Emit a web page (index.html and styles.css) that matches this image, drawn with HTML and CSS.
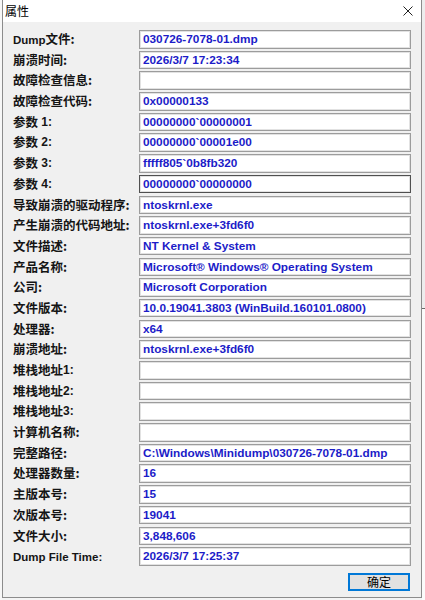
FILE: index.html
```
<!DOCTYPE html>
<html lang="zh-CN">
<head>
    <meta charset="UTF-8">
    <title>属性</title>
    <link rel="stylesheet" href="styles.css">
</head>
<body>
    <div class="desk-left"></div>

    <div class="dialog">
        <div class="titlebar">
            <span class="title">属性</span>
            <svg class="close" width="10" height="10" viewBox="0 0 10 10">
                <path d="M0.5 0.5 L9.5 9.5 M9.5 0.5 L0.5 9.5" stroke="#222" stroke-width="1" fill="none"/>
            </svg>
        </div>

        <div class="props">
            <div class="label"><span class="en">Dump</span>文件:</div><div class="field">030726-7078-01.dmp</div>
            <div class="label">崩溃时间:</div><div class="field">2026/3/7 17:23:34</div>
            <div class="label">故障检查信息:</div><div class="field"></div>
            <div class="label">故障检查代码:</div><div class="field">0x00000133</div>
            <div class="label">参数<span class="en num"> 1:</span></div><div class="field">00000000`00000001</div>
            <div class="label">参数<span class="en num"> 2:</span></div><div class="field">00000000`00001e00</div>
            <div class="label">参数<span class="en num"> 3:</span></div><div class="field">fffff805`0b8fb320</div>
            <div class="label">参数<span class="en num"> 4:</span></div><div class="field focused">00000000`00000000</div>
            <div class="label">导致崩溃的驱动程序:</div><div class="field">ntoskrnl.exe</div>
            <div class="label">产生崩溃的代码地址:</div><div class="field">ntoskrnl.exe+3fd6f0</div>
            <div class="label">文件描述:</div><div class="field">NT Kernel &amp; System</div>
            <div class="label">产品名称:</div><div class="field">Microsoft® Windows® Operating System</div>
            <div class="label">公司:</div><div class="field">Microsoft Corporation</div>
            <div class="label">文件版本:</div><div class="field">10.0.19041.3803 (WinBuild.160101.0800)</div>
            <div class="label">处理器:</div><div class="field">x64</div>
            <div class="label">崩溃地址:</div><div class="field">ntoskrnl.exe+3fd6f0</div>
            <div class="label">堆栈地址<span class="en num">1:</span></div><div class="field"></div>
            <div class="label">堆栈地址<span class="en num">2:</span></div><div class="field"></div>
            <div class="label">堆栈地址<span class="en num">3:</span></div><div class="field"></div>
            <div class="label">计算机名称:</div><div class="field"></div>
            <div class="label">完整路径:</div><div class="field">C:\Windows\Minidump\030726-7078-01.dmp</div>
            <div class="label">处理器数量:</div><div class="field">16</div>
            <div class="label">主版本号:</div><div class="field">15</div>
            <div class="label">次版本号:</div><div class="field">19041</div>
            <div class="label">文件大小:</div><div class="field">3,848,606</div>
            <div class="label"><span class="en">Dump File Time:</span></div><div class="field">2026/3/7 17:25:37</div>
        </div>

        <div class="actions">
            <button class="btn default">确定</button>
        </div>
    </div>

    <div class="desk-right">
        <div class="desk-top"></div>
        <div class="desk-bottom"></div>
    </div>
</body>
</html>
```

FILE: styles.css
```
html, body {
    margin: 0;
    padding: 0;
}

body {
    display: flex;
    width: 425px;
    height: 600px;
    background: #f4f4f4;
    font-family: "Liberation Sans", "Noto Sans CJK SC", sans-serif;
    overflow: hidden;
}

.desk-left {
    width: 2px;
    background: #f7f7f7;
}

.dialog {
    width: 418px;
    height: 597px;
    background: #f0f0f0;
    border: 1px solid #8c8c8c;
    border-top: none;
    display: flex;
    flex-direction: column;
}

/* title bar */
.titlebar {
    height: 22px;
    background: #ffffff;
    display: flex;
    align-items: center;
    justify-content: space-between;
    padding: 0 8px 0 2px;
}

.title {
    font-family: "Noto Sans CJK SC", sans-serif;
    font-size: 12px;
    color: #000;
    margin-top: -2px;
}

.close {
    margin-top: -1px;
}

/* property rows */
.props {
    display: grid;
    grid-template-columns: 126px 272px;
    grid-auto-rows: 18.5px;
    row-gap: 2.2px;
    padding: 8px 10px 0 10px;
}

.label {
    font-family: "Noto Sans CJK SC", sans-serif;
    font-size: 12.5px;
    font-weight: bold;
    line-height: 18.5px;
    color: #151515;
    white-space: pre;
}

.label .en {
    font-family: "Liberation Sans", sans-serif;
    font-size: 11.5px;
}

.label .num {
    font-size: 12px;
    vertical-align: 1px;
}

.field {
    box-sizing: border-box;
    height: 18.5px;
    background: #fff;
    border: 1px solid #9c9c9c;
    box-shadow: inset 0 0 0 1px #e2e2e2;
    padding: 0 3px;
    font-size: 11.8px;
    font-weight: bold;
    line-height: 16.5px;
    color: #1c1cc8;
    white-space: nowrap;
    overflow: hidden;
}

.field.focused {
    border-color: #505050;
}

/* buttons */
.actions {
    display: flex;
    justify-content: flex-end;
    padding: 7px 11px 0 0;
}

.btn {
    box-sizing: border-box;
    width: 62px;
    height: 18px;
    padding: 0;
    font-family: "Noto Sans CJK SC", sans-serif;
    font-size: 12px;
    line-height: 14px;
    color: #000;
    background: #e1e1e1;
    border: 1px solid #adadad;
}

.btn.default {
    border: 1px solid #0078d7;
    box-shadow: inset 0 0 0 1px #0078d7;
}

/* what shows behind the dialog on the right */
.desk-right {
    flex: 1;
    display: flex;
    flex-direction: column;
}

.desk-top {
    height: 308px;
    background: #ededed;
}

.desk-bottom {
    flex: 1;
    background: #fbfbfb;
    border-top: 1px solid #6a6a6a;
}
```
